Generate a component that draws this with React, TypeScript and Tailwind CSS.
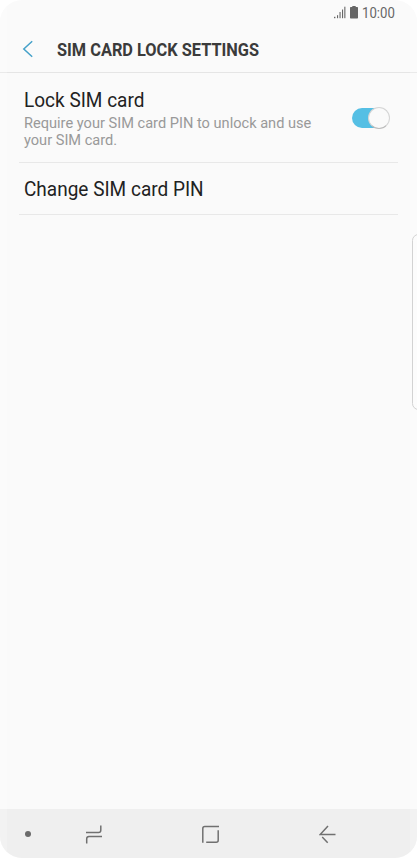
import React from "react";

function StatusBar() {
  return (
    <div className="flex h-[26px] items-center pl-[333px] text-[#666]">
      <svg className="h-[14px] w-[13px] shrink-0" viewBox="0 0 13 14" fill="currentColor">
        <rect x="1" y="10.800" width="1.4" height="1.400" />
        <rect x="4" y="9.200" width="1.1" height="3" />
        <rect x="6.500" y="6" width="1.1" height="6.200" />
        <rect x="9" y="3.500" width="1.1" height="8.700" />
        <rect x="11.300" y="0.700" width="1.1" height="11.500" />
      </svg>
      <svg className="ml-[4px] h-[14px] w-[8px] shrink-0" viewBox="0 0 8 14" fill="currentColor">
        <path d="M2.300 0h3.400v1h1.600q.7 0 .7.700v10q0 .7-.7.700H.7Q0 12.400 0 11.700V1.700q0-.7.7-.7h1.600z" />
      </svg>
      <span className="ml-[4px] origin-left scale-x-[0.85] whitespace-nowrap text-[15.500px] leading-[26px]">10:00</span>
    </div>
  );
}

function Header() {
  return (
    <header className="flex h-[47px] items-center border-b border-[#e5e5e5] pl-[22px]">
      <svg className="h-[18px] w-[12px] shrink-0" viewBox="0 0 12 18" fill="none" stroke="#45a1c9" strokeWidth="1.5">
        <path d="M10.200 1.200 1.800 9l8.400 7.700" />
      </svg>
      <h1 className="ml-[23px] origin-left scale-x-[0.86] pt-[2px] whitespace-nowrap text-[19px] font-bold text-[#3b3b3b]">
        SIM CARD LOCK SETTINGS
      </h1>
    </header>
  );
}

function Toggle() {
  return (
    <div className="mt-[1px] ml-auto flex h-[22px] w-[38px] shrink-0 items-center">
      <div className="flex h-[20px] w-[37px] items-center justify-end rounded-full bg-[#55bfe4]">
        <div className="-mr-px size-[22px] shrink-0 rounded-full border border-[#d5d5d5] border-b-[#bbb] bg-[#fafafa]" />
      </div>
    </div>
  );
}

function NavBar() {
  return (
    <nav className="flex h-[49px] items-center bg-[#efefef] pl-[25px] text-[#707070]">
      <div className="mt-[1px] size-[6px] rounded-full bg-[#6b6b6b]" />
      <svg className="ml-[54px] h-[20px] w-[18px]" viewBox="0 0 18 20" fill="none" stroke="currentColor" strokeWidth="1.5">
        <path d="M1 8.500h12.500q2.300 0 2.300-2.300V1.500M17 12.500H4q-2.300 0-2.300 2.300V19.500" />
      </svg>
      <svg className="ml-[98px] h-[20px] w-[18px]" viewBox="0 0 18 20" fill="none" stroke="currentColor" strokeWidth="1.5">
        <path d="M1.800 18.800V4.500q0-2 2-2H18M17.200 6.200v10q0 2-2 2H5.200" />
      </svg>
      <svg className="ml-[100px] h-[20px] w-[18px]" viewBox="0 0 18 20" fill="none" stroke="currentColor" strokeWidth="1.500">
        <path d="M9 2 1.200 10.500H16.500M3.200 13 8.700 18.700" />
      </svg>
    </nav>
  );
}

export default function App() {
  return (
    <div className="h-[858px] w-[417px] overflow-hidden bg-white font-['Roboto',sans-serif]">
      <div className="relative flex h-full flex-col overflow-hidden rounded-[22px] bg-[#fafafa]">
        <StatusBar />
        <Header />
        <main className="mx-[19px] flex-1">
          <section className="flex h-[90px] items-center border-b border-[#e8e8e8] pr-[8px] pl-[5px]">
            <div className="pt-[2px] whitespace-nowrap">
              <h2 className="origin-left scale-x-[0.975] text-[19.500px] leading-[26px] text-[#222]">Lock SIM card</h2>
              <p className="pt-px text-[14.600px] leading-[17px] text-[#999]">
                Require your SIM card PIN to unlock and use
                <br />
                your SIM card.
              </p>
            </div>
            <Toggle />
          </section>
          <section className="flex h-[52px] items-center border-b border-[#e8e8e8] pt-[2px] pl-[5px]">
            <h2 className="origin-left scale-x-[0.975] text-[19.500px] text-[#222]">Change SIM card PIN</h2>
          </section>
        </main>
        <NavBar />
        <div className="absolute top-[234px] -right-[8px] h-[176px] w-[13px] rounded-[8px] border border-[#c8c8c8] bg-[#fcfcfc]" />
        <div className="pointer-events-none absolute inset-y-0 left-0 w-[7px] bg-white/20" />
        <div className="pointer-events-none absolute inset-y-0 right-0 w-[7px] bg-white/20" />
      </div>
    </div>
  );
}
